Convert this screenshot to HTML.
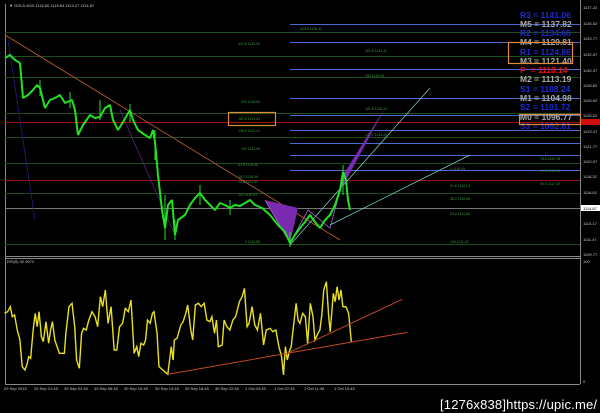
<!DOCTYPE html>
<html><head><style>
body{margin:0;background:#000;width:600px;height:413px;overflow:hidden}
svg{display:block;font-family:"Liberation Sans",sans-serif}
</style></head><body>
<svg width="600" height="413" viewBox="0 0 600 413">
<rect width="600" height="413" fill="#000"/>
<g stroke="#888" stroke-width="1" fill="none">
<line x1="5.5" y1="4" x2="5.5" y2="384"/>
<line x1="580.5" y1="0" x2="580.5" y2="384"/>
<line x1="5" y1="256.5" x2="580" y2="256.5"/>
<line x1="5" y1="258.5" x2="580" y2="258.5"/>
<line x1="5" y1="384.5" x2="580" y2="384.5"/>
</g>
<g stroke="#1e4d1e" stroke-width="1">
<line x1="5" y1="32.5" x2="580" y2="32.5"/>
<line x1="5" y1="56.5" x2="580" y2="56.5"/>
<line x1="5" y1="77.5" x2="580" y2="77.5"/>
<line x1="5" y1="113.5" x2="580" y2="113.5"/>
<line x1="5" y1="137.5" x2="580" y2="137.5"/>
<line x1="5" y1="163.5" x2="580" y2="163.5"/>
<line x1="5" y1="193.5" x2="580" y2="193.5"/>
<line x1="5" y1="244.5" x2="580" y2="244.5"/>
</g>
<line x1="5" y1="208.5" x2="580" y2="208.5" stroke="#777"/>
<g stroke="#a01010" stroke-width="1">
<line x1="5" y1="122.5" x2="580" y2="122.5"/>
<line x1="5" y1="180.5" x2="580" y2="180.5"/>
</g>
<g stroke="#4a6ad0" stroke-width="1">
<line x1="290" y1="24.5" x2="580" y2="24.5"/>
<line x1="290" y1="42.5" x2="580" y2="42.5"/>
<line x1="290" y1="69.5" x2="580" y2="69.5"/>
<line x1="290" y1="98.5" x2="580" y2="98.5"/>
<line x1="290" y1="115.5" x2="580" y2="115.5"/>
<line x1="290" y1="130.5" x2="580" y2="130.5"/>
<line x1="290" y1="143.5" x2="580" y2="143.5"/>
<line x1="290" y1="155.5" x2="580" y2="155.5"/>
<line x1="290" y1="170.5" x2="580" y2="170.5"/>
</g>
<line x1="5" y1="35" x2="340" y2="240" stroke="#c0602a" stroke-width="0.8"/>
<line x1="8" y1="40" x2="35" y2="220" stroke="#202080" stroke-width="0.8"/>
<line x1="120" y1="110" x2="175" y2="235" stroke="#6a2a8a" stroke-width="0.7"/>
<line x1="290" y1="245" x2="430" y2="88" stroke="#7fd0d0" stroke-width="0.7"/>
<line x1="330" y1="225" x2="470" y2="155" stroke="#7fd0d0" stroke-width="0.7"/>
<polygon points="265,200 298,208 290,243" fill="#7a2ab0"/>
<polygon points="338,195 345,172 385,108" fill="#7a2ab0"/>
<polyline points="265,200 290,243 308,210 330,228 345,172" fill="none" stroke="#9a6ad0" stroke-width="0.8"/>
<polyline fill="none" stroke="#22e022" stroke-width="2" stroke-linejoin="bevel" points="5,58 10,55 15,60 20,63 23,98 28,95 33,90 37,85 40,88 45,108 50,100 55,98 60,95 65,103 72,100 75,110 78,135 83,125 90,115 95,118 100,117 105,108 110,105 113,120 118,130 123,122 130,110 133,120 138,130 145,135 150,138 153,130 155,142 158,175 162,210 165,228 168,205 172,200 175,235 178,220 185,215 190,205 195,198 200,193 205,200 210,205 215,210 220,203 225,205 230,208 235,205 240,206 245,203 250,200 255,205 262,208 270,215 278,225 285,232 290,243 295,235 300,228 305,222 310,215 315,222 320,228 325,220 330,215 335,205 340,190 343,172 346,180 348,200 350,210"/>
<g stroke="#22e022" stroke-width="1">
<line x1="40" y1="80" x2="40" y2="96"/><line x1="70" y1="92" x2="70" y2="108"/><line x1="100" y1="100" x2="100" y2="120"/><line x1="130" y1="104" x2="130" y2="122"/><line x1="155" y1="130" x2="155" y2="160"/><line x1="165" y1="195" x2="165" y2="240"/><line x1="175" y1="220" x2="175" y2="240"/><line x1="200" y1="185" x2="200" y2="205"/><line x1="230" y1="200" x2="230" y2="215"/><line x1="290" y1="232" x2="290" y2="247"/><line x1="343" y1="165" x2="343" y2="195"/>
</g>
<text x="9" y="7" font-size="4" fill="#ccc">▼ GOLD,M15  1115.60 1115.64 1114.27 1114.87</text>
<g font-size="3.5" fill="#3a9a3a">
<text x="238" y="45">423.6 1125.82</text>
<text x="241" y="103">200 1126.82</text>
<text x="238" y="120">161.8 1124.61</text>
<text x="238" y="132">138.2 1122.41</text>
<text x="241" y="150">100 1121.06</text>
<text x="238" y="166">61.8 1119.46</text>
<text x="238" y="178">38.2 1118.46</text>
<text x="238" y="183">23.6 1117.41</text>
<text x="238" y="196">100 1116.23</text>
<text x="245" y="243">0 1111.85</text>
<text x="300" y="30">423.6 1136.11</text>
<text x="365" y="52">261.8 1131.31</text>
<text x="365" y="77">200 1129.06</text>
<text x="365" y="110">161.8 1126.24</text>
<text x="365" y="136">127.2 1123.22</text>
<text x="450" y="170">0 1118.95</text>
<text x="450" y="187">61.8 1118.14</text>
<text x="450" y="200">38.2 1116.86</text>
<text x="450" y="215">23.6 1114.66</text>
<text x="450" y="243">100 1111.63</text>
<text x="540" y="160">78.6 1120.78</text>
<text x="540" y="172">61.8 1119.16</text>
<text x="540" y="185">50.0 1117.40</text>
</g>
<g font-size="8.5" font-weight="bold">
<text x="520" y="18" fill="#1a2ad0">R3 = 1141.06</text>
<text x="520" y="27" fill="#aaa">M5 = 1137.82</text>
<text x="520" y="36" fill="#1a2ad0">R2 = 1134.68</text>
<text x="520" y="45" fill="#aaa">M4 = 1129.81</text>
<text x="520" y="55" fill="#1a2ad0">R1 = 1124.86</text>
<text x="520" y="64" fill="#aaa">M3 = 1121.40</text>
<text x="520" y="73" fill="#e01010">P&#160;&#160;= 1118.14</text>
<text x="520" y="82" fill="#aaa">M2 = 1113.19</text>
<text x="520" y="92" fill="#1a2ad0">S1 = 1108.24</text>
<text x="520" y="101" fill="#aaa">M1 = 1104.98</text>
<text x="520" y="110" fill="#1a2ad0">S2 = 1101.72</text>
<text x="520" y="120" fill="#aaa">M0 = 1096.77</text>
<text x="520" y="129" fill="#1a2ad0">S3 = 1092.81</text>
</g>
<g fill="none" stroke="#e08a3a" stroke-width="1.2">
<rect x="508.5" y="42.5" width="64" height="21"/>
<rect x="519.5" y="114.5" width="61" height="10"/>
<rect x="228.5" y="112.5" width="47" height="13"/>
</g>
<g font-size="4" fill="#ccc">
<text x="583" y="9">1137.22</text>
<text x="583" y="25">1135.52</text>
<text x="583" y="40">1133.77</text>
<text x="583" y="56">1132.07</text>
<text x="583" y="72">1130.37</text>
<text x="583" y="87">1128.62</text>
<text x="583" y="102">1126.92</text>
<text x="583" y="117">1125.22</text>
<text x="583" y="133">1123.47</text>
<text x="583" y="148">1121.77</text>
<text x="583" y="163">1120.07</text>
<text x="583" y="178">1118.32</text>
<text x="583" y="194">1116.62</text>
<text x="583" y="210">1114.87</text>
<text x="583" y="225">1113.17</text>
<text x="583" y="241">1111.47</text>
<text x="583" y="256">1109.77</text>
<text x="583" y="263">100</text>
<text x="583" y="383">0</text>
</g>
<rect x="581" y="119" width="19" height="6" fill="#d01010"/>
<rect x="581" y="205" width="19" height="6" fill="#fff"/>
<text x="583" y="210" font-size="4" fill="#000">1114.87</text>
<text x="7" y="263" font-size="4" fill="#ccc">RSI(5) 32.9072</text>
<g transform="translate(0,250) scale(0.3831,0.3333)">
<polyline vector-effect="non-scaling-stroke" fill="none" stroke="#e8e020" stroke-width="1.4" points="12,190 20,185 27,170 32,200 38,195 45,240 52,270 58,350 65,360 70,345 75,320 80,325 87,235 92,190 97,230 102,185 108,260 113,275 120,215 127,280 132,240 137,215 143,270 155,310 168,310 172,250 180,170 188,160 195,230 200,330 207,355 213,250 218,235 225,240 232,210 240,185 248,200 255,230 262,140 268,170 275,120 282,220 290,170 298,300 305,300 312,230 320,220 327,175 335,185 342,150 350,310 357,290 362,320 368,280 375,285 380,270 385,210 392,220 398,190 402,185 410,250 415,350 425,360 438,373 447,290 452,330 455,270 462,265 472,225 478,215 485,190 490,165 498,240 503,270 510,165 518,160 525,170 533,160 540,210 548,215 553,200 560,250 565,210 570,290 580,285 585,210 592,230 600,240 608,210 615,200 625,155 632,140 638,115 645,230 650,220 658,170 665,225 672,240 680,190 688,285 695,240 705,235 712,245 720,240 728,290 735,320 740,375 745,290 750,330 755,305 760,290 765,240 773,160 778,210 783,220 790,190 797,200 803,280 810,160 817,200 822,270 830,250 835,240 840,195 845,120 852,95 858,200 862,245 870,130 875,155 880,110 885,150 890,120 895,170 903,170 910,190 917,275"/>
<line vector-effect="non-scaling-stroke" x1="437" y1="373" x2="1063" y2="247" stroke="#c04a20" stroke-width="1"/>
<line vector-effect="non-scaling-stroke" x1="750" y1="310" x2="1050" y2="148" stroke="#c04a20" stroke-width="1"/>
</g>
<g font-size="4" fill="#ccc">
<text x="4" y="390">29 Sep 2015</text>
<text x="34" y="390">29 Sep 21:45</text>
<text x="64" y="390">30 Sep 02:45</text>
<text x="94" y="390">30 Sep 06:45</text>
<text x="124" y="390">30 Sep 10:45</text>
<text x="155" y="390">30 Sep 14:45</text>
<text x="185" y="390">30 Sep 18:45</text>
<text x="215" y="390">30 Sep 22:45</text>
<text x="245" y="390">1 Oct 03:45</text>
<text x="274" y="390">1 Oct 07:45</text>
<text x="304" y="390">1 Oct 11:45</text>
<text x="334" y="390">1 Oct 15:45</text>
</g>
<text x="440" y="409" font-size="13" fill="#fff" font-family="Liberation Sans Narrow,Liberation Sans,sans-serif" textLength="157">[1276x838]https://upic.me/</text>
</svg>
</body></html>
